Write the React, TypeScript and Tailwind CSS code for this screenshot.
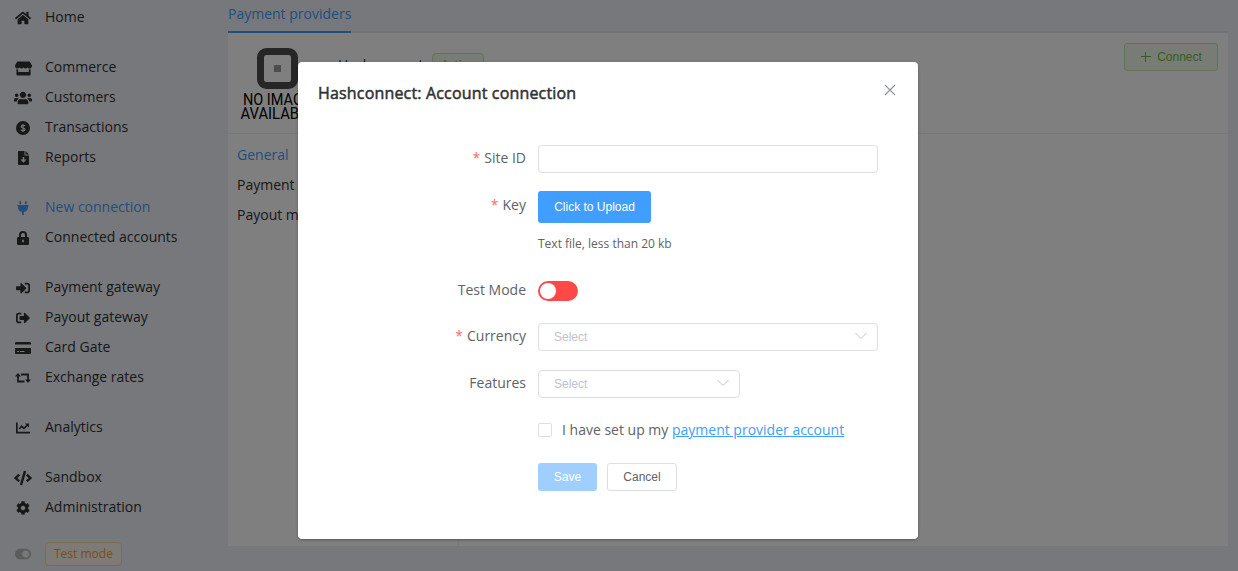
import type { ReactNode } from 'react'
import { FaHome, FaStore, FaUsers, FaSignInAlt, FaSignOutAlt, FaCode, FaCog, FaToggleOn } from 'react-icons/fa'

const DollarIcon = () => (
  <svg viewBox="0 0 14 14" className="size-3.5" fill="none">
    <circle cx="7" cy="7" r="7" fill="#303133" />
    <path d="M9 5.1C8.7 4.5 8 4.2 7 4.2 5.8 4.2 5.1 4.7 5.1 5.5c0 2 3.9 1 3.9 3 0 .8-.8 1.3-2 1.3-1.1 0-1.8-.4-2.1-1.1M7 3v8" stroke="#eff1f8" strokeWidth="1.1" />
  </svg>
)
const ReportIcon = () => (
  <svg viewBox="0 0 11 14" className="h-3.5 w-[11px]" fill="#303133">
    <path d="M1 0H6.500v3.600c0 .5.400.9.900.9H11V13c0 .6-.4 1-1 1H1c-.6 0-1-.4-1-1V1c0-.6.400-1 1-1Z" />
    <path d="M7.500 0 11 3.500H7.500Z" />
    <path d="M4.700 6h1.600v2.500h2.200L5.500 11.800 2.500 8.500h2.200Z" fill="#eff1f8" />
  </svg>
)
const PlugIcon = () => (
  <svg viewBox="0 0 12 14" className="h-3.5 w-3" fill="#409eff">
    <path d="M2.300.9a.9.900 0 0 1 1.800 0V3.300H2.300ZM7.900.9a.9.900 0 0 1 1.800 0V3.300H7.900ZM.7 4h10.600c.4 0 .6.3.6.600s-.2.700-.6.700H11v1.200a4.500 4.500 0 0 1-4.100 4.400V14H5.100v-3.100A4.500 4.500 0 0 1 1 6.500V5.300H.7C.3 5.300.1 5 .1 4.600S.3 4 .7 4Z" />
  </svg>
)
const LockIcon = () => (
  <svg viewBox="0 0 12 14" className="h-3.5 w-3">
    <path d="M3 6.500V4a3 3 0 0 1 6 0v2.500" fill="none" stroke="#303133" strokeWidth="2" />
    <rect y="6" width="12" height="8" rx="1.300" fill="#303133" />
    <rect x="5.200" y="8.500" width="1.600" height="3" rx=".8" fill="#eff1f8" />
  </svg>
)
const CardIcon = () => (
  <svg viewBox="0 0 16 12" className="h-3 w-4" fill="#303133">
    <path d="M0 2.500V1.300C0 .6.600 0 1.300 0h13.400c.7 0 1.300.6 1.300 1.300v1.200ZM0 6h16v5c0 .6-.4 1-1 1H1c-.6 0-1-.4-1-1Z" />
    <path d="M2 9.500h2M5 9.500h4.500" stroke="#eff1f8" strokeWidth="1" />
  </svg>
)
const SwapIcon = () => (
  <svg viewBox="0 0 16 10" className="h-2.5 w-4" fill="#303133">
    <path d="M3 2.500V8.500H9.500M6 1.500h7v6" fill="none" stroke="#303133" strokeWidth="1.800" />
    <path d="M0 3.500 3 0l3 3.500ZM10 6.500h6L13 10Z" />
  </svg>
)
const ChartIcon = () => (
  <svg viewBox="0 0 14 12" className="h-3 w-3.5" fill="none" stroke="#303133" strokeWidth="1.700">
    <path d="M.85.500V10.700H14" />
    <path d="M3.300 7 5.600 4.300 8 6.300 11.500 3" />
    <path d="M9 1.500h4v4Z" fill="#303133" stroke="none" />
  </svg>
)

type Item = { label: string; icon: ReactNode; active?: boolean }
const groups: Item[][] = [
  [{ label: 'Home', icon: <FaHome size={16} /> }],
  [
    { label: 'Commerce', icon: <FaStore size={17} /> },
    { label: 'Customers', icon: <FaUsers size={18} /> },
    { label: 'Transactions', icon: <DollarIcon /> },
    { label: 'Reports', icon: <ReportIcon /> },
  ],
  [
    { label: 'New connection', icon: <PlugIcon />, active: true },
    { label: 'Connected accounts', icon: <LockIcon /> },
  ],
  [
    { label: 'Payment gateway', icon: <FaSignInAlt size={14} /> },
    { label: 'Payout gateway', icon: <FaSignOutAlt size={14} /> },
    { label: 'Card Gate', icon: <CardIcon /> },
    { label: 'Exchange rates', icon: <SwapIcon /> },
  ],
  [{ label: 'Analytics', icon: <ChartIcon /> }],
  [
    { label: 'Sandbox', icon: <FaCode size={18} /> },
    { label: 'Administration', icon: <FaCog size={14} /> },
  ],
]

function Sidebar() {
  return (
    <nav className="flex w-[228px] shrink-0 flex-col gap-5 pt-[2px] text-[#303133]">
      {groups.map((g, i) => (
        <div key={i}>
          {g.map((it) => (
            <div key={it.label} className={it.active ? 'flex h-[30px] items-center text-[#409eff]' : 'flex h-[30px] items-center'}>
              <span className="ml-[13px] mr-3 flex w-5 justify-center pt-[2px]">{it.icon}</span>
              <span className="leading-[30px]">{it.label}</span>
            </div>
          ))}
        </div>
      ))}
      <div className="flex items-center">
        <span className="ml-[13px] mr-3 flex w-5 justify-center text-[#b8b8b8]"><FaToggleOn size={16} /></span>
        <span className="h-6 rounded border border-[#f5dab1] bg-[#fdf6ec] px-2 text-xs leading-[22px] text-[#e6a23c]">Test mode</span>
      </div>
    </nav>
  )
}

function Placeholder() {
  return (
    <svg viewBox="0 0 80 80" className="size-20 overflow-visible">
      <rect x="22.500" y="8.500" width="34" height="34" rx="6" fill="none" stroke="#4d4d4d" strokeWidth="7" />
      <rect x="36" y="22" width="7" height="7" fill="#999" />
      <g fill="#000" fontFamily="Roboto, sans-serif" fontSize="16.500">
        <text x="5" y="62" textLength="68" lengthAdjust="spacingAndGlyphs">NO IMAGE</text>
        <text x="2.500" y="76" textLength="75" lengthAdjust="spacingAndGlyphs">AVAILABLE</text>
      </g>
    </svg>
  )
}

function Content() {
  return (
    <main className="flex flex-1 flex-col pb-[25px] pr-2.5">
      <div className="flex h-[33px] shrink-0 border-b-2 border-[#e4e7ed]">
        <span className="h-[33px] border-b-2 border-[#409eff] leading-7 text-[#409eff]">Payment providers</span>
      </div>
      <section className="flex flex-1 flex-col bg-white">
        <header className="flex h-[101px] items-start border-b border-[#ebeef5] p-2.5">
          <Placeholder />
          <span className="ml-5 mt-2.5 text-[#303133] leading-6">Hashconnect</span>
          <span className="ml-[9px] mt-2.5 h-6 rounded border border-[#c2e7b0] bg-[#f0f9eb] px-2 text-xs leading-[22px] text-[#67c23a]">Active</span>
          <button className="ml-auto flex h-7 w-[94px] items-center justify-center gap-[5px] rounded-[3px] border border-[#c2e7b0] bg-[#f0f9eb] font-['Liberation_Sans',sans-serif] text-xs text-[#67c23a]">
            <svg viewBox="0 0 12 12" className="size-3" stroke="currentColor"><path d="M1 5.500h10M5.500 1v10" /></svg>
            Connect
          </button>
        </header>
        <div className="flex flex-1">
          <ul className="w-[231px] border-r border-[#ebeef5] px-[9px] pt-1.5 leading-[30px] text-[#303133]">
            <li className="text-[#409eff]">General</li>
            <li>Payment methods</li>
            <li>Payout methods</li>
          </ul>
        </div>
      </section>
    </main>
  )
}

function Row({ label, required, tight = true, className, children }: { label: string; required?: boolean; tight?: boolean; className: string; children: ReactNode }) {
  return (
    <div className={'flex items-start ' + className}>
      <div className={tight ? 'w-[220px] shrink-0 pr-3 text-right leading-[26px]' : 'w-[220px] shrink-0 pr-3 text-right leading-7'}>
        {required && <span className="mr-1 text-[#f56c6c]">*</span>}
        {label}
      </div>
      {children}
    </div>
  )
}

function Select({ className }: { className: string }) {
  return (
    <div className={"flex h-7 items-center justify-between rounded border border-[#dcdfe6] pl-[15px] pr-2.5 font-['Liberation_Sans',sans-serif] text-xs text-[#c0c4cc] " + className}>
      Select
      <svg viewBox="0 0 12 8" className="mb-0.5 h-2 w-3" fill="none" stroke="#c0c4cc"><path d="m.5 1 5.500 5.500L11.500 1" /></svg>
    </div>
  )
}

function Dialog() {
  return (
    <div role="dialog" className="flex h-[477px] w-[620px] flex-col rounded-sm bg-white px-5 text-[#606266] shadow-[0_1px_3px_rgba(0,0,0,0.3)]">
      <div className="flex h-[83px] items-start justify-between pr-[2px] pt-[18px]">
        <h2 className="mt-px text-base font-normal leading-6 tracking-[0.17px] text-[#303133] [-webkit-text-stroke:0.5px_#303133]">Hashconnect: Account connection</h2>
        <svg viewBox="0 0 12 12" className="mt-1 size-3" stroke="#909399" strokeWidth="1.100"><path d="m1 1 10 10M11 1 1 11" /></svg>
      </div>
      <Row label="Site ID" required className="h-[46px]">
        <input className="h-7 w-[340px] rounded border border-[#dcdfe6]" />
      </Row>
      <Row label="Key" required tight={false} className="h-[86px]">
        <div>
          <button className="h-8 w-[113px] rounded-[3px] bg-[#409eff] font-['Liberation_Sans',sans-serif] text-xs text-white">Click to Upload</button>
          <div className="mt-3 text-xs leading-[18px]">Text file, less than 20 kb</div>
        </div>
      </Row>
      <Row label="Test Mode" className="h-[46px]">
        <div className="mt-1 flex h-5 w-10 items-center rounded-full bg-[#ff4949] pl-0.5"><span className="size-4 rounded-full bg-white" /></div>
      </Row>
      <Row label="Currency" required className="h-[47px]"><Select className="w-[340px]" /></Row>
      <Row label="Features" className="h-[47px]"><Select className="w-[202px]" /></Row>
      <label className="ml-[220px] flex h-[46px] items-start leading-[26px]">
        <span className="mt-1.5 mr-2.5 size-3.5 rounded-[2px] border border-[#dcdfe6]" />
        <span>I have set up my <a className="text-[#409eff] underline">payment provider account</a></span>
      </label>
      <div className="ml-[220px] flex gap-2.5 font-['Liberation_Sans',sans-serif] text-xs">
        <button className="h-7 w-[59px] rounded-[3px] bg-[#a0cfff] text-white">Save</button>
        <button className="h-7 w-[70px] rounded-[3px] border border-[#dcdfe6]">Cancel</button>
      </div>
    </div>
  )
}

export default function App() {
  return (
    <div className="relative h-[571px] w-[1238px] overflow-hidden bg-[#eff1f8] font-['Open_Sans',sans-serif] text-sm">
      <div className="flex h-full"><Sidebar /><Content /></div>
      <div className="absolute inset-0 flex items-start justify-center bg-black/50 pr-[22px] pt-[62px]"><Dialog /></div>
    </div>
  )
}
